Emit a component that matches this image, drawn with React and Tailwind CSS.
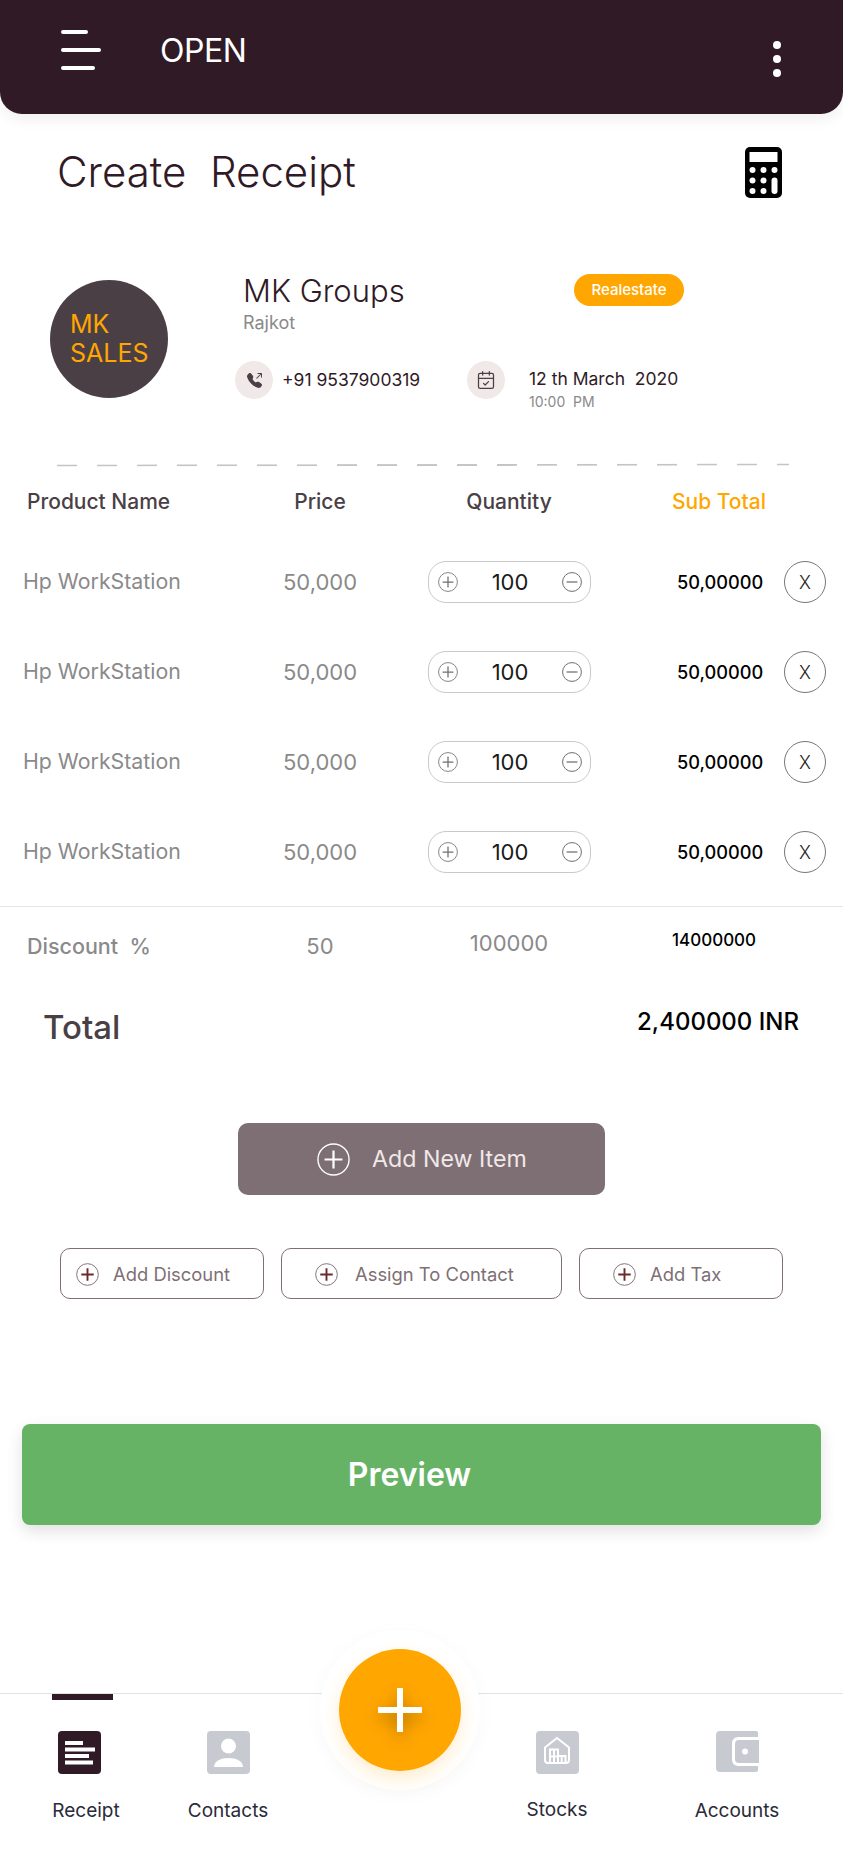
import React from 'react';
import { CalendarCheck } from 'lucide-react';
import { BsFillTelephoneOutboundFill } from 'react-icons/bs';

const rows = [1, 2, 3, 4];
const dashes = Array.from({ length: 19 }, (_, i) => i);

function CirclePlus({ size, color, cross, width = 1.5 }) {
    return (
        <svg width={size} height={size} viewBox="0 0 24 24" fill="none" className="shrink-0">
            <circle cx="12" cy="12" r="11.3" stroke={color} strokeWidth="1" />
            <path d="M12 5.5v13M5.5 12h13" stroke={cross || color} strokeWidth={width} />
        </svg>
    );
}

function CircleMinus() {
    return (
        <svg width="20" height="20" viewBox="0 0 24 24" fill="none" className="shrink-0">
            <circle cx="12" cy="12" r="11.3" stroke="#6f6f6f" strokeWidth="1.2" />
            <path d="M5.5 12h13" stroke="#6f6f6f" strokeWidth="1.5" />
        </svg>
    );
}

function Calculator() {
    return (
        <svg width="37" height="51" viewBox="0 0 37 51">
            <rect width="37" height="51" rx="5" fill="#000" />
            <rect x="4.5" y="5" width="28" height="10" fill="#fff" />
            <g fill="#fff">
                <circle cx="7.5" cy="23" r="3" />
                <circle cx="18.5" cy="23" r="3" />
                <circle cx="29.5" cy="23" r="3" />
                <circle cx="7.5" cy="33.5" r="3" />
                <circle cx="18.5" cy="33.5" r="3" />
                <circle cx="7.5" cy="44" r="3" />
                <circle cx="18.5" cy="44" r="3" />
                <rect x="26.5" y="30.5" width="6" height="16.5" rx="3" />
            </g>
        </svg>
    );
}

function ReceiptIcon() {
    return (
        <svg width="43" height="43" viewBox="0 0 43 43">
            <rect width="43" height="43" rx="4" fill="#301a26" />
            <path d="M7 10h18v4H7zM7 16.500h30v4H7zM7 23h24v4H7zM7 29.500h28v4H7z" fill="#fff" />
        </svg>
    );
}

function ContactsIcon() {
    return (
        <svg width="43" height="43" viewBox="0 0 43 43">
            <rect width="43" height="43" rx="4" fill="#c8cad1" />
            <circle cx="21.500" cy="15" r="7.500" fill="#fff" />
            <path d="M7 36c0-6 7-9 14.500-9S36 30 36 36z" fill="#fff" />
        </svg>
    );
}

function StocksIcon() {
    return (
        <svg width="43" height="43" viewBox="0 0 43 43">
            <rect width="43" height="43" rx="4" fill="#c8cad1" />
            <path d="M9 16.500 21 7l12 9.500V29a3 3 0 0 1-3 3H12a3 3 0 0 1-3-3z" fill="none" stroke="#fff" strokeWidth="2" />
            <path d="M14 32V18.500h8V32M22 25h7.500v7M18 19v13M25.700 25v7M14 25.500h8" fill="none" stroke="#fff" strokeWidth="2" />
        </svg>
    );
}

function AccountsIcon() {
    return (
        <svg width="43" height="41" viewBox="0 0 43 41">
            <path d="M4 0h36a2 2 0 0 1 2 2v4H22a6 6 0 0 0-6 6v17a6 6 0 0 0 6 6h20v4a2 2 0 0 1-2 2H4a4 4 0 0 1-4-4V4a4 4 0 0 1 4-4z" fill="#c8cad1" />
            <path d="M23 9h20v23H23a4 4 0 0 1-4-4V13a4 4 0 0 1 4-4z" fill="#c8cad1" />
            <circle cx="29" cy="20.500" r="3" fill="#fff" />
        </svg>
    );
}

function Row() {
    return (
        <div className="grid grid-cols-[217px_160px_218px_166px_42px] items-center h-[90px] pl-[23px]">
            <span className="text-[21.300px] text-[#8a8a8a]">Hp WorkStation</span>
            <span className="text-[22px] text-[#8a8a8a] text-center">50,000</span>
            <div className="flex items-center justify-between w-[163px] h-[42px] ml-[28px] pl-[9px] pr-[8px] border border-[#c9c9c9] rounded-[18px]">
                <CirclePlus size={20} color="#6f6f6f" />
                <span className="text-[22px] text-[#1a1a1a]">100</span>
                <CircleMinus />
            </div>
            <span className="text-[18.200px] font-medium text-black pl-[59px] mt-[1px]">50,00000</span>
            <div className="flex items-center justify-center w-[42px] h-[42px] border border-[#777] rounded-full text-[18px] font-light text-[#222]">X</div>
        </div>
    );
}

function SmallButton({ w, pl, gap, children }) {
    return (
        <button className={`flex items-center ${gap} h-[51px] ${w} ${pl} pt-[2px] border border-[#7e6f75] rounded-[10px] text-[18.400px] text-[#7e6f75]`}>
            <CirclePlus size={23} color="#7e6f75" cross="#6a2a2a" width={2} />
            {children}
        </button>
    );
}

function Tab({ ml, label, children, iconClass, labelClass, active }) {
    return (
        <div className={`flex flex-col items-center w-[100px] ${ml}`}>
            <div className={active ? 'h-[6px] w-[61px] mr-[7px] bg-[#301a26]' : 'h-[6px] w-[61px]'}></div>
            <div className={`h-[43px] mt-[31px] ${iconClass || ''}`}>{children}</div>
            <span className={`text-[19px] leading-[24px] text-[#2a2a38] ${labelClass || 'mt-[25px]'}`}>{label}</span>
        </div>
    );
}

const App = () => {
    return (
        <div className="w-[843px] h-[1850px] bg-white overflow-hidden font-['Inter',sans-serif]">
            <div className="flex items-center justify-between h-[114px] pl-[61px] pr-[62px] bg-[#301a26] rounded-b-[22px] shadow-[0_6px_14px_rgba(0,0,0,0.06)]">
                <div className="flex items-center">
                    <div className="flex flex-col gap-[14px] w-[40px] mb-[14px]">
                        <div className="w-[27px] h-[4px] rounded-full bg-white"></div>
                        <div className="w-[40px] h-[4px] rounded-full bg-white"></div>
                        <div className="w-[34px] h-[4px] rounded-full bg-white"></div>
                    </div>
                    <span className="ml-[59px] mb-[12px] text-[32px] text-white tracking-[-0.5px]">OPEN</span>
                </div>
                <div className="flex flex-col gap-[6px] mt-[4px]">
                    <div className="w-[8px] h-[8px] rounded-full bg-white"></div>
                    <div className="w-[8px] h-[8px] rounded-full bg-white"></div>
                    <div className="w-[8px] h-[8px] rounded-full bg-white"></div>
                </div>
            </div>

            <div className="flex items-center justify-between h-[116px] pl-[57px] pr-[61px]">
                <h1 className="mb-[2px] text-[42px] font-light text-[#301a26] whitespace-pre">Create  Receipt</h1>
                <Calculator />
            </div>

            <div className="flex h-[234px] pl-[50px] pt-[44px]">
                <div className="flex flex-col items-start justify-center w-[118px] h-[118px] mt-[6px] pl-[20px] rounded-full bg-[#4a3f45] text-[25px] leading-[29.500px] text-[#ffa600]">
                    <span>MK</span>
                    <span>SALES</span>
                </div>
                <div className="ml-[67px] w-[449px]">
                    <div className="flex items-center justify-between h-[32px] pl-[8px]">
                        <span className="mt-[2px] text-[31px] font-light text-[#301a26]">MK Groups</span>
                        <span className="flex items-center justify-center w-[110px] h-[32px] rounded-full bg-[#ffa600] text-[15px] font-medium text-white">Realestate</span>
                    </div>
                    <div className="mt-[7px] pl-[8px] text-[18px] leading-[20px] text-[#8a8a8a]">Rajkot</div>
                    <div className="flex mt-[28px]">
                        <div className="flex items-center self-start gap-[9px] w-[232px]">
                            <div className="flex items-center justify-center w-[38px] h-[38px] rounded-full bg-[#f1e8e8]">
                                <BsFillTelephoneOutboundFill size={15} color="#4a3f45" />
                            </div>
                            <span className="text-[17.500px] text-[#301a26]">+91 9537900319</span>
                        </div>
                        <div className="flex items-start gap-[24px]">
                            <div className="flex items-center justify-center w-[38px] h-[38px] rounded-full bg-[#f1e8e8]">
                                <CalendarCheck size={20} color="#4a3f45" strokeWidth={1.5} />
                            </div>
                            <div className="mt-[8px]">
                                <div className="text-[17.500px] leading-[20px] text-[#301a26] whitespace-pre">12 th March  2020</div>
                                <div className="mt-[5px] text-[14px] leading-[16px] text-[#8a8a8a] whitespace-pre">10:00  PM</div>
                            </div>
                        </div>
                    </div>
                </div>
            </div>

            <div className="flex gap-[20px] w-[732px] ml-[57px] overflow-hidden rotate-[-0.08deg]">
                {dashes.map((d) => (
                    <div key={d} className="w-[20px] h-[2px] shrink-0 bg-[#c4c4c4]"></div>
                ))}
            </div>

            <div className="grid grid-cols-[217px_160px_218px_166px_42px] items-center h-[40px] mt-[16px] pl-[23px] text-[21px] font-medium text-[#4a3f45]">
                <span className="ml-[4px]">Product Name</span>
                <span className="text-center">Price</span>
                <span className="text-center">Quantity</span>
                <span className="pl-[54px] text-[#ffa600]">Sub Total</span>
            </div>

            <div className="mt-[15px]">
                {rows.map((r) => (
                    <Row key={r} />
                ))}
            </div>

            <div className="h-px mt-[9px] bg-[#e5e5e5]"></div>

            <div className="grid grid-cols-[217px_160px_218px_166px_42px] items-center h-[78px] pl-[23px]">
                <span className="ml-[4px] text-[21.500px] font-medium text-[#8a8a8a] whitespace-pre">Discount  %</span>
                <span className="text-center text-[22px] text-[#8a8a8a]">50</span>
                <span className="text-center text-[22px] mb-[6px] text-[#8a8a8a]">100000</span>
                <span className="pl-[54px] mb-[10px] text-[17px] font-medium text-black">14000000</span>
            </div>

            <div className="flex items-center justify-between h-[86px] pl-[43px] pr-[44px]">
                <span className="text-[33px] font-medium text-[#4a3f45]">Total</span>
                <span className="mb-[12px] text-[24px] font-medium text-black">2,400000 INR</span>
            </div>

            <button className="flex items-center gap-[22px] w-[367px] h-[72px] mx-auto mt-[52px] pl-[79px] rounded-[10px] bg-[#7e6f75] text-[23.200px] text-[#f1e8e8]">
                <CirclePlus size={33} color="#fff" width={1.6} />
                Add New Item
            </button>

            <div className="flex gap-[17px] mt-[53px] pl-[60px]">
                <SmallButton w="w-[204px]" pl="pl-[15px]" gap="gap-[14px]">Add Discount</SmallButton>
                <SmallButton w="w-[281px]" pl="pl-[33px]" gap="gap-[17px]">Assign To Contact</SmallButton>
                <SmallButton w="w-[204px]" pl="pl-[33px]" gap="gap-[14px]">Add Tax</SmallButton>
            </div>

            <button className="block w-[799px] h-[101px] ml-[22px] mt-[125px] pr-[24px] rounded-[8px] bg-[#66b366] text-[32px] font-semibold text-white shadow-[0_6px_16px_rgba(0,0,0,0.12)]">
                Preview
            </button>

            <div className="relative flex h-[157px] mt-[168px] border-t border-[#e2e2e2]">
                <Tab ml="ml-[36px]" label="Receipt" iconClass="mr-[13px]" active><ReceiptIcon /></Tab>
                <Tab ml="ml-[42px]" label="Contacts"><ContactsIcon /></Tab>
                <Tab ml="ml-[229px]" label="Stocks" labelClass="mt-[24px]"><StocksIcon /></Tab>
                <Tab ml="ml-[80px]" label="Accounts"><AccountsIcon /></Tab>

                <div className="absolute left-[320px] top-[-64px] flex items-center justify-center w-[160px] h-[160px] rounded-full bg-white shadow-[0_4px_20px_rgba(0,0,0,0.03)]">
                    <div className="flex items-center justify-center w-[122px] h-[122px] rounded-full bg-[#ffa600] shadow-[0_8px_18px_rgba(255,166,0,0.2)]">
                        <svg width="44" height="44" viewBox="0 0 44 44" className="drop-shadow-[0_6px_8px_rgba(0,0,0,0.3)]">
                            <path d="M19 0h6v19h19v6H25v19h-6V25H0v-6h19z" fill="#fff" />
                        </svg>
                    </div>
                </div>
            </div>
        </div>
    );
};
export default App;
